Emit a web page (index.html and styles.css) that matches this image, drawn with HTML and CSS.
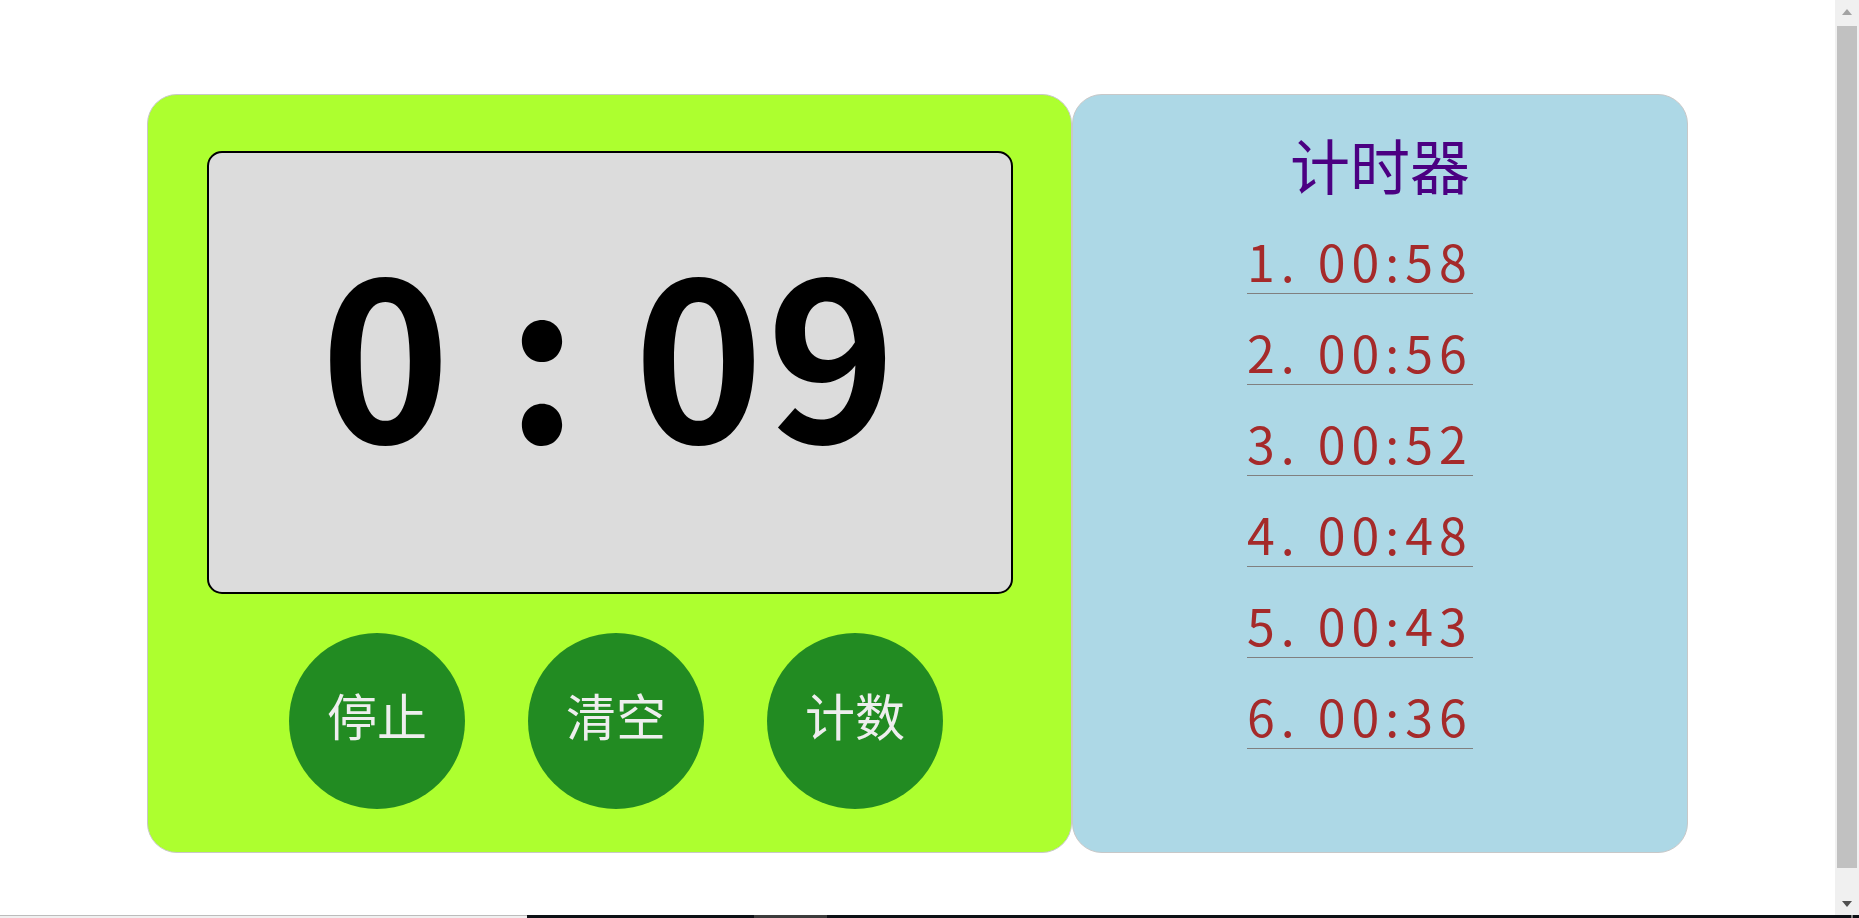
FILE: index.html
```html
<!DOCTYPE html>
<html lang="zh-CN">
<head>
<meta charset="utf-8">
<title>计时器</title>
<link rel="stylesheet" href="styles.css">
</head>
<body>
<div class="screen">
  <div class="viewport">
    <main class="page">
      <section class="timer">
        <div class="display">0 : 09</div>
        <div class="controls">
          <button class="btn">停止</button>
          <button class="btn">清空</button>
          <button class="btn">计数</button>
        </div>
      </section>
      <aside class="records">
        <h1 class="title">计时器</h1>
        <ol class="laps">
          <li class="lap">1. 00:58</li>
          <li class="lap">2. 00:56</li>
          <li class="lap">3. 00:52</li>
          <li class="lap">4. 00:48</li>
          <li class="lap">5. 00:43</li>
          <li class="lap">6. 00:36</li>
        </ol>
      </aside>
    </main>
    <div class="vscroll">
      <span class="arrow-up"></span>
      <span class="thumb"></span>
      <span class="arrow-down"></span>
    </div>
  </div>
  <div class="hstrip">
    <span class="hs-track"></span>
    <span class="hs-rest"><span class="hs-seg"></span><span class="hs-mark"></span></span>
  </div>
</div>
</body>
</html>
```
FILE: styles.css
```css
* { box-sizing: border-box; }
html, body { margin: 0; height: 100%; overflow: hidden; background: #fff; }
body { font-family: "Noto Sans CJK SC", "Noto Sans", sans-serif; }

.screen { height: 918px; display: flex; flex-direction: column; }
.viewport { flex: 1; display: flex; min-height: 0; }

.page {
  flex: 1;
  display: flex;
  justify-content: center;
  align-items: flex-start;
  padding-top: 94px;
}

.timer {
  width: 925px;
  height: 759px;
  background: #adff2f;
  border: 1px solid #c8c8c8;
  border-radius: 30px;
  padding: 56px 0 0 59px;
}

.display {
  width: 806px;
  height: 443px;
  background: #dcdcdc;
  border: 2px solid #000;
  border-radius: 15px;
  padding-top: 84px;
  font-size: 220px;
  font-weight: 700;
  line-height: 220px;
  letter-spacing: 3px;
  text-align: center;
  white-space: pre;
  color: #000;
}

.controls {
  display: flex;
  gap: 63px;
  margin-top: 39px;
  padding-left: 82px;
}

.btn {
  width: 176px;
  height: 176px;
  border: 0;
  border-radius: 50%;
  background: #228b22;
  color: #eeeeee;
  font-family: inherit;
  font-size: 50px;
  line-height: 1;
  padding: 0 0 15px;
  display: flex;
  align-items: center;
  justify-content: center;
}

.records {
  width: 616px;
  height: 759px;
  background: #add8e6;
  border: 1px solid #c8c8c8;
  border-radius: 30px;
  padding-top: 39px;
}

.title {
  margin: 0;
  font-size: 60px;
  font-weight: 400;
  line-height: 60px;
  text-align: center;
  color: #4b0082;
}

.laps {
  list-style: none;
  margin: 33px 0 0;
  padding: 0 0 0 174px;
  display: flex;
  flex-direction: column;
  align-items: flex-start;
  gap: 24px;
}

.lap {
  font-size: 50px;
  line-height: 66px;
  letter-spacing: 6px;
  color: #a52a2a;
  border-bottom: 1px solid #808080;
  white-space: pre;
}

/* window scrollbar */
.vscroll {
  width: 24px;
  background: #f0f0f0;
  display: flex;
  flex-direction: column;
  align-items: center;
  padding-top: 9px;
}
.arrow-up {
  width: 0; height: 0;
  border-left: 5.5px solid transparent;
  border-right: 5.5px solid transparent;
  border-bottom: 6px solid #a3a3a3;
}
.thumb {
  width: 20px;
  height: 842px;
  margin-top: 11px;
  background: #c1c1c1;
}
.arrow-down {
  width: 0; height: 0;
  margin-top: 33px;
  border-left: 5.5px solid transparent;
  border-right: 5.5px solid transparent;
  border-top: 6px solid #505050;
}

.hstrip { height: 3px; display: flex; }
.hs-track { width: 527px; background: #f0f0f0; border-top: 1px solid #bcbcbc; }
.hs-rest { flex: 1; background: #0c1015; display: flex; padding-left: 227px; }
.hs-seg { width: 73px; background: #3c3c3c; }
.hs-mark { width: 2px; margin-left: 1024px; background: #808080; }
```
